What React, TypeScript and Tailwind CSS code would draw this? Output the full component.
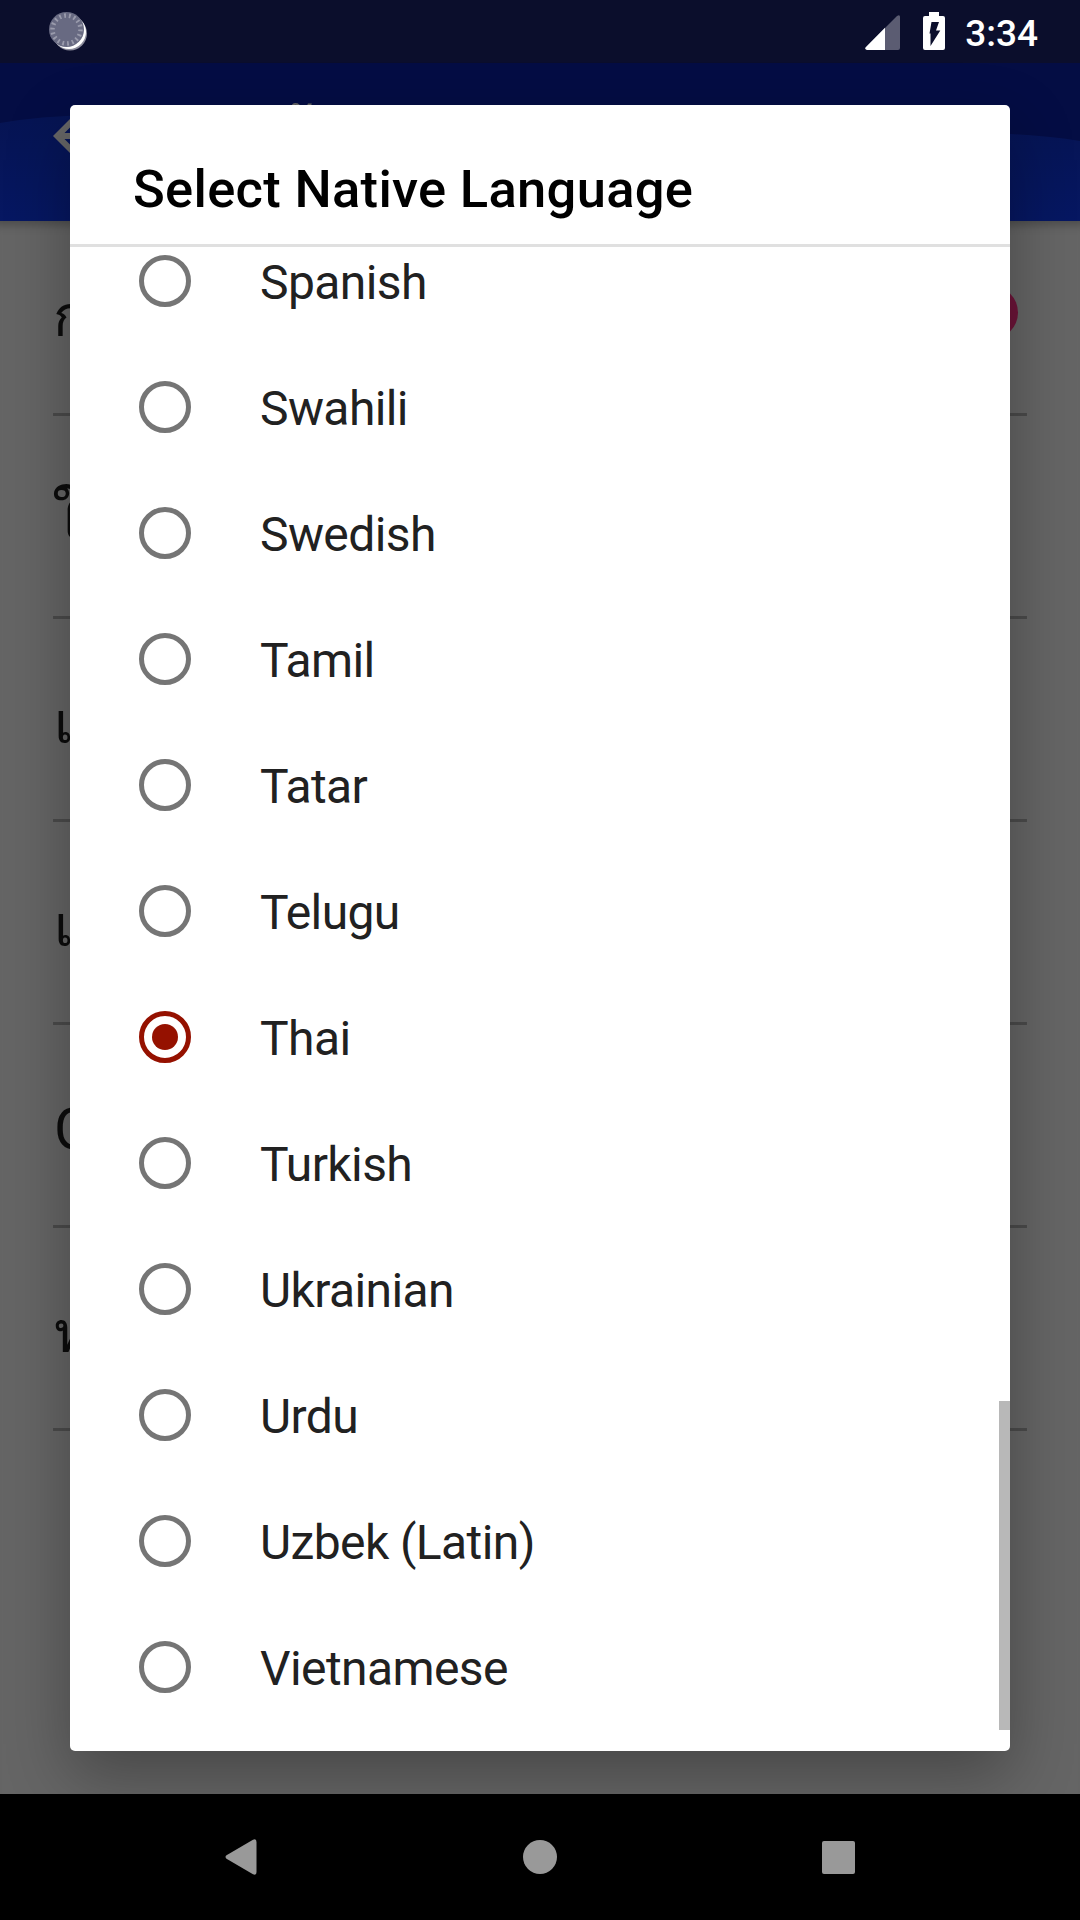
import { useState } from 'react';

const LANGUAGES = [
  'Spanish',
  'Swahili',
  'Swedish',
  'Tamil',
  'Tatar',
  'Telugu',
  'Thai',
  'Turkish',
  'Ukrainian',
  'Urdu',
  'Uzbek (Latin)',
  'Vietnamese',
];

const SETTINGS = [
  { label: 'ใ', tall: true },
  { label: 'เ' },
  { label: 'เ' },
  { label: 'G' },
  { label: 'ท' },
];

function StatusBar() {
  return (
    <div className="flex h-[63px] shrink-0 items-start justify-between bg-[#0b0e2c] pr-[42px] pl-[48px]">
      <svg width="42" height="42" viewBox="0 0 42 42" className="mt-[11px]">
        <circle cx="22" cy="22.5" r="17" fill="#8c8c9c" />
        <circle cx="21" cy="21" r="17" fill="#ffffff" />
        <circle cx="18.5" cy="18.5" r="17.5" fill="#686a82" />
        <circle
          cx="18.5"
          cy="18.5"
          r="14"
          fill="none"
          stroke="#9a9bac"
          strokeWidth="4.5"
          strokeDasharray="1.8 3.06"
        />
      </svg>
      <div className="flex items-start">
        <svg width="35" height="35" viewBox="0 0 35 35" className="mt-[15px]">
          <path d="M2 35Q-1 34 1 32L32 1Q35-1 35 2V33Q35 35 33 35Z" fill="#5b5c72" />
          <path d="M2 35Q-1 34 1 32L20 12.8V35Z" fill="#fff" />
        </svg>
        <svg width="22" height="38" viewBox="0 0 22 38" className="mt-[12px] ml-[23px]">
          <path d="M6 0H16V4H20Q22 4 22 6V36Q22 38 20 38H2Q0 38 0 36V6Q0 4 2 4H6Z" fill="#fff" />
          <path d="M8.5 10H16L13 18.5H17.3L7.5 34V21.5H6.5Z" fill="#0b0e2c" />
        </svg>
        <span className="mt-[12px] ml-[20px] text-[37px] leading-[44px] font-medium text-white">3:34</span>
      </div>
    </div>
  );
}

function AppBar() {
  return (
    <div className="relative z-10 h-[158px] shrink-0 overflow-hidden bg-[#040d44]">
      <svg width="1080" height="158" viewBox="0 0 1080 158" className="absolute inset-0">
        <defs>
          <linearGradient id="wave" x1="0" y1="0" x2="0" y2="1">
            <stop offset="0" stopColor="#061453" />
            <stop offset="1" stopColor="#061762" />
          </linearGradient>
        </defs>
        <path d="M0 60Q40 53 90 52H940L1010 71Q1050 73 1080 78V158H0Z" fill="url(#wave)" />
      </svg>
      <div className="relative flex items-start pt-[37px] pl-[41px]">
        <svg width="72" height="72" viewBox="0 0 24 24" fill="#666">
          <path d="M20 11H7.83l5.59-5.59L12 4l-8 8 8 8 1.41-1.41L7.83 13H20v-2z" />
        </svg>
        <h1 className="mt-[7px] ml-[65px] text-[56px] leading-[72px] font-medium text-[#666]">การตั้งค่า</h1>
      </div>
    </div>
  );
}

function SettingsPage() {
  return (
    <div className="flex-1 bg-[#656565] px-[53px] text-[57px] text-[#0c0c0c] shadow-[inset_0_12px_10px_-8px_rgba(0,0,0,0.25)]">
      <div className="flex h-[195px] items-center justify-between border-b-[3px] border-[#4b4b4b]">
        <span>การ</span>
        <div className="mr-[9px] mb-[10px] size-[53px] rounded-full bg-[#6d1439]" />
      </div>
      {SETTINGS.map(({ label, tall }, i) => (
        <div key={i} className="flex h-[203px] items-center border-b-[3px] border-[#4b4b4b] pt-[9px] pl-px">
          <span className={tall ? '-mt-[6px] -ml-[2px] text-[60px]' : ''}>{label}</span>
        </div>
      ))}
    </div>
  );
}

function NavigationBar() {
  return (
    <div className="relative z-30 flex h-[126px] shrink-0 items-center justify-between bg-black px-[225px]">
      <svg width="32" height="36" viewBox="0 0 32 36" fill="#999">
        <path d="M1.5 16.3L28 .8Q31.5-.8 31.5 3V33Q31.5 36.8 28 35.2L1.5 19.7Q-.5 18 1.5 16.3Z" />
      </svg>
      <div className="size-[34px] rounded-full bg-[#999]" />
      <div className="size-[33px] rounded-[2px] bg-[#999]" />
    </div>
  );
}

interface LanguageOptionProps {
  label: string;
  checked: boolean;
  onSelect: () => void;
}

function LanguageOption({ label, checked, onSelect }: LanguageOptionProps) {
  return (
    <button
      type="button"
      role="radio"
      aria-checked={checked}
      onClick={onSelect}
      className="flex h-[126px] w-full shrink-0 items-center pl-[69px] text-left"
    >
      <span
        className={
          checked
            ? 'flex size-[52px] items-center justify-center rounded-full border-[5px] border-[#951100]'
            : 'flex size-[52px] items-center justify-center rounded-full border-[5px] border-[#757575]'
        }
      >
        {checked && <span className="size-[26px] rounded-full bg-[#951100]" />}
      </span>
      <span className="mt-[4px] ml-[69px] text-[48px] leading-[56px] tracking-[-0.6px] text-[#212121]">{label}</span>
    </button>
  );
}

export default function App() {
  const [selected, setSelected] = useState('Thai');

  return (
    <div className="relative flex h-[1920px] w-[1080px] flex-col overflow-hidden font-['Roboto','Noto_Sans',sans-serif]">
      <StatusBar />
      <AppBar />
      <SettingsPage />
      <NavigationBar />

      {/* Dialog */}
      <div
        role="dialog"
        className="absolute top-[105px] left-[70px] z-20 flex h-[1646px] w-[940px] flex-col rounded-[5px] bg-white shadow-[0_24px_64px_rgba(0,0,0,0.3)]"
      >
        <div className="h-[142px] shrink-0 border-b-[3px] border-[#e0e0e0] pt-[53px] pl-[63px]">
          <h2 className="text-[52.5px] leading-[62px] font-medium tracking-[0.3px] text-black">Select Native Language</h2>
        </div>
        <div role="radiogroup" className="relative flex h-[1483px] flex-col justify-end overflow-hidden">
          {LANGUAGES.map((lang) => (
            <LanguageOption
              key={lang}
              label={lang}
              checked={lang === selected}
              onSelect={() => setSelected(lang)}
            />
          ))}
          <div className="absolute right-0 bottom-0 h-[329px] w-[11px] bg-[#b8b8b8]" />
        </div>
      </div>
    </div>
  );
}
